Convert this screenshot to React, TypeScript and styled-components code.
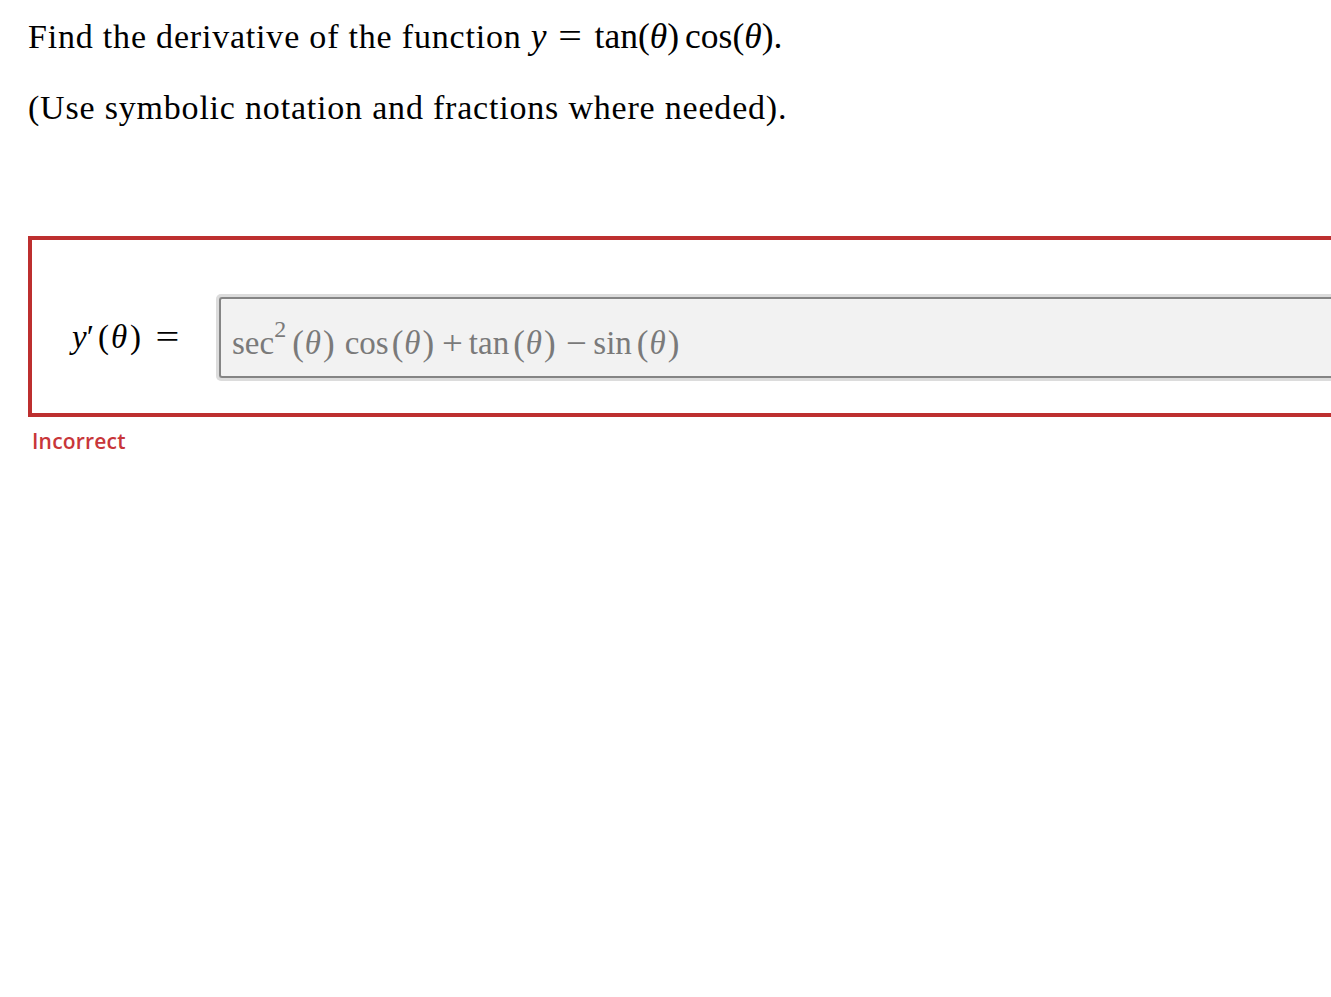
import React from "react";
import styled, { createGlobalStyle } from "styled-components";

const Global = createGlobalStyle`
  html, body { margin: 0; padding: 0; background: #ffffff; overflow: hidden; }
  body { font-family: "Liberation Serif", "Times New Roman", serif; color: #000; }
`;

const Page = styled.div`
  padding: 14px 0 0 28px;
  display: flex;
  flex-direction: column;
`;

const Prompt = styled.p`
  margin: 0;
  font-family: "Liberation Serif", serif;
  font-size: 34px;
  letter-spacing: 0.8px;
  line-height: 46px;
  white-space: nowrap;
`;

const Hint = styled(Prompt)`
  margin-top: 25px;
`;

const I = styled.i`
  font-style: italic;
`;

const Math = styled.span`
  letter-spacing: 0;
  font-size: 35.5px;
  line-height: 0;
`;

const Eq = styled.span<{ $l: number; $r: number; $s?: number }>`
  display: inline-block;
  transform: scaleX(${(p) => p.$s ?? 1.18});
  margin: 0 ${(p) => p.$r}px 0 ${(p) => p.$l}px;
`;

const Sp = styled.span<{ $w: number }>`
  display: inline-block;
  width: ${(p) => p.$w}px;
`;

const AnswerBox = styled.div`
  margin-top: 105px;
  width: 1340px;
  box-sizing: border-box;
  border: 4px solid #bd2f2f;
  display: flex;
  align-items: center;
  padding: 54px 0 32px 40px;
  height: 181px;
`;

const Label = styled.div`
  font-family: "Liberation Serif", serif;
  font-size: 33px;
  width: 144px;
  white-space: nowrap;
  flex-shrink: 0;
`;

const Field = styled.div`
  flex: 1;
  height: 87px;
  box-sizing: border-box;
  border-radius: 5px;
  background: #dcdcdc;
  padding: 3px 0 3px 3px;
  display: flex;
`;

const FieldInner = styled.div`
  flex: 1;
  box-sizing: border-box;
  border: 2px solid #858585;
  border-right: none;
  border-radius: 3px 0 0 3px;
  background: #f2f2f2;
  color: #7a7a7a;
  font-family: "Liberation Serif", serif;
  font-size: 33px;
  display: flex;
  align-items: center;
  padding: 12px 0 0 11px;
  white-space: nowrap;
`;

const Sup = styled.span`
  font-size: 24px;
  position: relative;
  top: -14px;
  margin-left: 0;
`;

const Paren = styled.span`
  font-size: 35px;
`;

const Theta = styled.i`
  font-style: italic;
  padding: 0 2px 0 1px;
`;

const LabelTheta = styled.i`
  font-style: italic;
  padding: 0 3px 0 2px;
`;

const Op = styled.span`
  display: inline-block;
  transform: scaleX(1.12);
`;

const Feedback = styled.div`
  margin-top: 10px;
  margin-left: 4px;
  font-family: "Open Sans", sans-serif;
  font-weight: 600;
  font-size: 21px;
  letter-spacing: 0.2px;
  color: #c8363a;
`;

const Arg = () => (
  <>
    <Paren>(</Paren>
    <Theta>θ</Theta>
    <Paren>)</Paren>
  </>
);

export default function App() {
  return (
    <>
      <Global />
      <Page>
        <Prompt>
          Find the derivative of the function{" "}
          <Math>
            <I>y</I>
            <Eq $l={13} $r={15}>=</Eq>tan(<I>θ</I>)<Sp $w={6} />cos(<I>θ</I>).
          </Math>
        </Prompt>
        <Hint>(Use symbolic notation and fractions where needed).</Hint>
        <AnswerBox>
          <Label>
            <I>y</I>′<Sp $w={4} />(<LabelTheta>θ</LabelTheta>)<Eq $l={17} $r={0} $s={1.28}>=</Eq>
          </Label>
          <Field>
            <FieldInner>
              sec<Sup>2</Sup>
              <Sp $w={6} />
              <Arg />
              <Sp $w={10} />
              cos
              <Sp $w={3} />
              <Arg />
              <Sp $w={9} />
              <Op>+</Op>
              <Sp $w={7} />
              tan
              <Sp $w={4} />
              <Arg />
              <Sp $w={11} />
              <Op>−</Op>
              <Sp $w={8} />
              sin
              <Sp $w={5} />
              <Arg />
            </FieldInner>
          </Field>
        </AnswerBox>
        <Feedback>Incorrect</Feedback>
      </Page>
    </>
  );
}
